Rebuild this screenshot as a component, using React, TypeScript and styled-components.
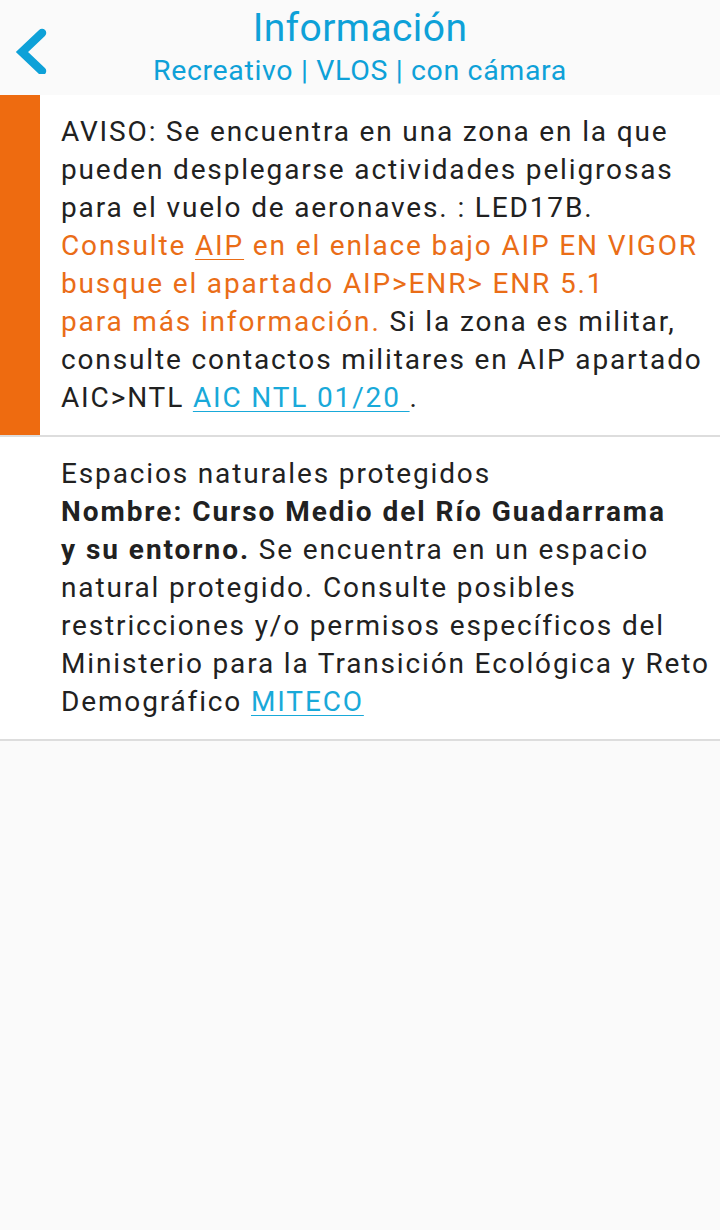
import React from "react";
import styled, { createGlobalStyle } from "styled-components";

const Global = createGlobalStyle`
  html, body { margin: 0; padding: 0; background: #fafafa; }
  body { font-family: Roboto, "Noto Sans", sans-serif; -webkit-font-smoothing: antialiased; }
`;

const Page = styled.div`
  width: 720px;
  min-height: 1230px;
  background: #fafafa;
`;

const Header = styled.header`
  position: relative;
  height: 95px;
  display: flex;
  flex-direction: column;
  align-items: center;
  background: #fafafa;
  color: #0ea1d8;
`;

const BackButton = styled.button`
  position: absolute;
  left: 9px;
  top: 24px;
  width: 44px;
  height: 52px;
  padding: 0;
  border: 0;
  background: transparent;
  display: flex;
  align-items: center;
  justify-content: center;
`;

const Title = styled.h1`
  margin: 5px 0 0;
  font-size: 39px;
  line-height: 46px;
  font-weight: 400;
  letter-spacing: 0.4px;
`;

const Subtitle = styled.div`
  margin-top: 2px;
  font-size: 28.5px;
  line-height: 36px;
  font-weight: 400;
  letter-spacing: 0.65px;
`;

const Card = styled.section`
  display: flex;
  background: #ffffff;
  border-bottom: 2px solid #dddddd;
`;

const Accent = styled.div<{ $color?: string }>`
  width: 40px;
  flex: none;
  background: ${(p) => p.$color ?? "transparent"};
`;

const Body = styled.p`
  margin: 0;
  padding: 18px 4px 18px 21px;
  font-size: 28px;
  line-height: 38px;
  letter-spacing: 1.85px;
  color: #212121;
  flex: 1;
`;

const Warn = styled.span`
  color: #ea6d17;
`;

const Link = styled.a<{ $color?: string }>`
  color: ${(p) => p.$color ?? "#19a9d9"};
  text-decoration: underline;
  text-decoration-thickness: 1px;
  text-underline-offset: 4px;
`;

const Bold = styled.strong`
  font-weight: 700;
  letter-spacing: 1.95px;
`;

export default function App() {
  return (
    <Page>
      <Global />
      <Header>
        <BackButton aria-label="Volver">
          <svg width="40" height="48" viewBox="0 0 40 48">
            <path
              d="M31 7 L11 26 L31 45"
              fill="none"
              stroke="#0ea1d8"
              strokeWidth="8.5"
              strokeLinecap="round"
              strokeLinejoin="miter"
            />
          </svg>
        </BackButton>
        <Title>Información</Title>
        <Subtitle>Recreativo | VLOS | con cámara</Subtitle>
      </Header>
      <Card>
        <Accent $color="#ee6b10" />
        <Body>
          AVISO: Se encuentra en una zona en la que pueden desplegarse actividades peligrosas
          para el vuelo de aeronaves. : LED17B.
          <br />
          <Warn>
            Consulte <Link $color="#ea6d17">AIP</Link> en el enlace bajo AIP EN VIGOR
            <br />
            busque el apartado AIP&gt;ENR&gt; ENR 5.1
            <br />
            para más información.
          </Warn>{" "}
          Si la zona es militar, consulte contactos militares en AIP apartado AIC&gt;NTL{" "}
          <Link>AIC NTL 01/20 </Link>.
        </Body>
      </Card>
      <Card>
        <Accent />
        <Body>
          Espacios naturales protegidos
          <br />
          <Bold>
            Nombre: Curso Medio del Río Guadarrama
            <br />y su entorno.
          </Bold>{" "}
          Se encuentra en un espacio natural protegido. Consulte posibles restricciones y/o
          permisos específicos del Ministerio para la Transición Ecológica y Reto Demográfico{" "}
          <Link>MITECO</Link>
        </Body>
      </Card>
    </Page>
  );
}
